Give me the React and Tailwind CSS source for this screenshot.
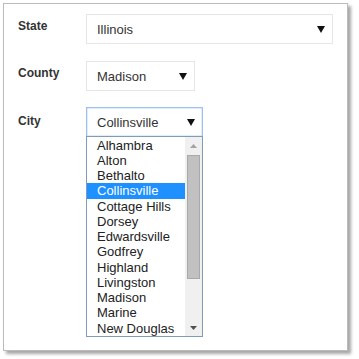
import React from "react";

const cities = [
  "Alhambra",
  "Alton",
  "Bethalto",
  "Collinsville",
  "Cottage Hills",
  "Dorsey",
  "Edwardsville",
  "Godfrey",
  "Highland",
  "Livingston",
  "Madison",
  "Marine",
  "New Douglas",
];

function Arrow() {
  return (
    <svg width="8" height="7" viewBox="0 0 8 7" className="block">
      <path d="M0 0 H8 L4 7 Z" fill="#111" />
    </svg>
  );
}

function Select({ value, width, focused }) {
  return (
    <div
      className={`flex items-center justify-between h-[30px] pl-[10px] pr-[7px] bg-white border ${
        focused ? "border-[#9cc0f2] shadow-[inset_0_0_0_0.5px_#c3d8f6]" : "border-[#e6e6e6]"
      } text-[13px] text-[#333]`}
      style={{ width }}
    >
      <span className="leading-none">{value}</span>
      <Arrow />
    </div>
  );
}

export default function App() {
  return (
    <div className="w-[359px] h-[359px] bg-white pt-[3px] pl-[3px]" style={{ fontFamily: '"Liberation Sans", Arial, sans-serif' }}>
      <div className="relative w-[345px] h-[348px] border border-[#bbbbbb] bg-white shadow-[3px_3px_3px_rgba(0,0,0,0.35)] pt-[10px] pl-[14px]">
        <div className="flex items-start">
          <div className="w-[68px] pt-[5px] text-[12px] font-bold text-[#333] leading-[14px]">State</div>
          <Select value="Illinois" width={247} />
        </div>
        <div className="flex items-start mt-[17px]">
          <div className="w-[68px] pt-[5px] text-[12px] font-bold text-[#333] leading-[14px]">County</div>
          <Select value="Madison" width={109} />
        </div>
        <div className="flex items-start mt-[16px]">
          <div className="w-[68px] pt-[7px] text-[12px] font-bold text-[#333] leading-[14px]">City</div>
          <div className="relative">
            <Select value="Collinsville" width={117} focused />
            <div className="absolute left-0 top-[29px] w-[117px] h-[201px] border border-[#7f9db9] bg-white flex">
              <div className="flex-1 pt-[0.5px]">
                {cities.map((c) => (
                  <div
                    key={c}
                    className={`h-[15.25px] pl-[10px] text-[13px] leading-[15.25px] whitespace-nowrap overflow-hidden ${
                      c === "Collinsville" ? "bg-[#1e90ff] text-white" : "text-[#222]"
                    }`}
                  >
                    {c}
                  </div>
                ))}
              </div>
              <div className="w-[17px] bg-[#f0f0f0] flex flex-col items-center">
                <div className="h-[17px] flex items-center justify-center">
                  <svg width="7" height="4" viewBox="0 0 7 4">
                    <path d="M0 4 H7 L3.5 0 Z" fill="#a3a3a3" />
                  </svg>
                </div>
                <div className="w-[13px] h-[124px] mt-[1px] bg-[#c1c1c1] border border-[#a9a9a9]" />
                <div className="flex-1" />
                <div className="h-[17px] flex items-center justify-center">
                  <svg width="7" height="4" viewBox="0 0 7 4">
                    <path d="M0 0 H7 L3.5 4 Z" fill="#505050" />
                  </svg>
                </div>
              </div>
            </div>
          </div>
        </div>
      </div>
    </div>
  );
}
